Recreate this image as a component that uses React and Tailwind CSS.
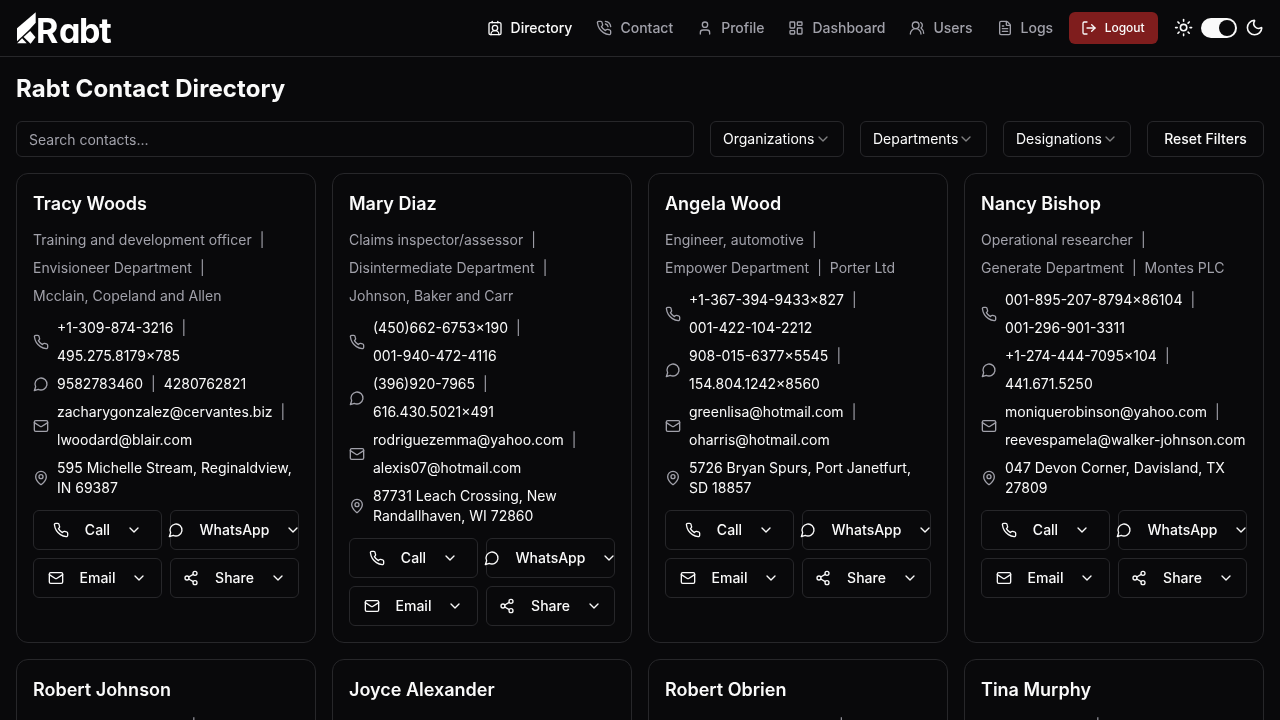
import React from "react";
import {
  ContactRound,
  User,
  LayoutDashboard,
  UsersRound,
  FileText,
  LogOut,
  Sun,
  Moon,
  Mail,
  MapPin,
  Share2,
  ChevronDown,
} from "lucide-react";

const HANDSET =
  "M22 16.92v3a2 2 0 0 1-2.18 2 19.79 19.79 0 0 1-8.63-3.07 19.5 19.5 0 0 1-6-6 19.79 19.79 0 0 1-3.07-8.67A2 2 0 0 1 4.11 2h3a2 2 0 0 1 2 1.72 12.84 12.84 0 0 0 .7 2.81 2 2 0 0 1-.45 2.11L8.09 9.91a16 16 0 0 0 6 6l1.27-1.27a2 2 0 0 1 2.11-.45 12.84 12.84 0 0 0 2.81.7A2 2 0 0 1 22 16.92z";

function Stroke({ className, paths }) {
  return (
    <svg
      className={className}
      viewBox="0 0 24 24"
      fill="none"
      stroke="currentColor"
      strokeWidth="2"
      strokeLinecap="round"
      strokeLinejoin="round"
    >
      {paths.map((d) => (
        <path key={d} d={d} />
      ))}
    </svg>
  );
}

const Phone = ({ className }) => <Stroke className={className} paths={[HANDSET]} />;
const PhoneCall = ({ className }) => (
  <Stroke className={className} paths={[HANDSET, "M14.05 2a9 9 0 0 1 8 7.94", "M14.05 6A5 5 0 0 1 18 10"]} />
);
const MessageCircle = ({ className }) => (
  <Stroke className={className} paths={["M7.9 20A9 9 0 1 0 4 16.1L2 22Z"]} />
);

const NAV = [
  { label: "Directory", icon: ContactRound, active: true },
  { label: "Contact", icon: PhoneCall },
  { label: "Profile", icon: User },
  { label: "Dashboard", icon: LayoutDashboard },
  { label: "Users", icon: UsersRound },
  { label: "Logs", icon: FileText },
];

const FILTERS = [
  { label: "Organizations", width: "w-[134px]" },
  { label: "Departments", width: "w-[127px]" },
  { label: "Designations", width: "w-[128px]" },
];

const CONTACTS = [
  {
    name: "Tracy Woods",
    role: ["Training and development officer", "Envisioneer Department", "Mcclain, Copeland and Allen"],
    phones: ["+1-309-874-3216", "495.275.8179x785"],
    chats: ["9582783460", "4280762821"],
    emails: ["zacharygonzalez@cervantes.biz", "lwoodard@blair.com"],
    address: "595 Michelle Stream, Reginaldview, IN 69387",
  },
  {
    name: "Mary Diaz",
    role: ["Claims inspector/assessor", "Disintermediate Department", "Johnson, Baker and Carr"],
    phones: ["(450)662-6753x190", "001-940-472-4116"],
    chats: ["(396)920-7965", "616.430.5021x491"],
    emails: ["rodriguezemma@yahoo.com", "alexis07@hotmail.com"],
    address: "87731 Leach Crossing, New Randallhaven, WI 72860",
  },
  {
    name: "Angela Wood",
    role: ["Engineer, automotive", "Empower Department", "Porter Ltd"],
    phones: ["+1-367-394-9433x827", "001-422-104-2212"],
    chats: ["908-015-6377x5545", "154.804.1242x8560"],
    emails: ["greenlisa@hotmail.com", "oharris@hotmail.com"],
    address: "5726 Bryan Spurs, Port Janetfurt, SD 18857",
  },
  {
    name: "Nancy Bishop",
    role: ["Operational researcher", "Generate Department", "Montes PLC"],
    phones: ["001-895-207-8794x86104", "001-296-901-3311"],
    chats: ["+1-274-444-7095x104", "441.671.5250"],
    emails: ["moniquerobinson@yahoo.com", "reevespamela@walker-johnson.com"],
    address: "047 Devon Corner, Davisland, TX 27809",
  },
];

const MORE = [
  { name: "Robert Johnson", role: ["Engineer, maintenance"] },
  { name: "Joyce Alexander", role: [] },
  { name: "Robert Obrien", role: ["Administrator, healthcare"] },
  { name: "Tina Murphy", role: ["Theatre director"] },
];

function Logo() {
  return (
    <svg width="98" height="34" viewBox="0 0 98 34" fill="#ffffff" aria-label="Rabt">
      <path d="M19.7 1.2V11.8L13 19 1 30.2V17.2z" />
      <path d="M14.2 20l5.3 6.2-4.9 6.6-7-6.7z" />
      <path d="M1.2 32.2l4.9-5 4.6 5z" />
      <text
        x="20 43 63 83.2"
        y="31.8"
        fontSize="34"
        className="font-['Inter',sans-serif] font-bold [font-feature-settings:'cv11']"
      >
        Rabt
      </text>
    </svg>
  );
}

function Items({ values }) {
  return (
    <div className="flex flex-wrap leading-7">
      {values.map((v, i) => (
        <span key={v} className="whitespace-nowrap">
          {v}
          {i < values.length - 1 && <span className="mx-2 text-[#a1a1aa]">|</span>}
        </span>
      ))}
    </div>
  );
}

function Line({ icon: Icon, children }) {
  return (
    <div className="flex items-center gap-2">
      <Icon className="size-4 shrink-0 text-[#a1a1aa]" />
      {children}
    </div>
  );
}

function ActionButton({ icon: Icon, label }) {
  return (
    <button className="flex h-10 items-center justify-center gap-4 rounded-md border border-[#27272a] text-sm font-medium whitespace-nowrap">
      <Icon className="size-4 shrink-0" />
      {label}
      <ChevronDown className="size-4 shrink-0" />
    </button>
  );
}

function Card({ c }) {
  return (
    <div className="rounded-xl border border-[#27272a] p-4 text-sm">
      <h2 className="mb-2 text-lg leading-7 font-semibold">{c.name}</h2>
      <div className="text-[#a1a1aa]">
        <Items values={c.role} />
      </div>
      <div className="mt-1">
        <Line icon={Phone}><Items values={c.phones} /></Line>
        <Line icon={MessageCircle}><Items values={c.chats} /></Line>
        <Line icon={Mail}><Items values={c.emails} /></Line>
        <div className="mt-1">
          <Line icon={MapPin}><span>{c.address}</span></Line>
        </div>
      </div>
      <div className="mt-3 grid grid-cols-2 gap-2">
        <ActionButton icon={Phone} label="Call" />
        <ActionButton icon={MessageCircle} label="WhatsApp" />
        <ActionButton icon={Mail} label="Email" />
        <ActionButton icon={Share2} label="Share" />
      </div>
    </div>
  );
}

export default function App() {
  return (
    <div className="h-[720px] overflow-hidden bg-[#09090b] font-['Inter',sans-serif] text-[#fafafa]">
      <div className="will-change-transform">
        <header className="flex h-[57px] items-center justify-between border-b border-[#27272a] px-4">
          <Logo />
          <div className="flex items-center gap-4">
            <nav className="flex items-center gap-6">
              {NAV.map(({ label, icon: Icon, active }) => (
                <a
                  key={label}
                  className={`flex items-center gap-2 text-sm font-medium ${active ? "text-[#fafafa]" : "text-[#a1a1aa]"}`}
                >
                  <Icon className="size-4" />
                  {label}
                </a>
              ))}
            </nav>
            <button className="-ml-[0.5px] flex h-8 w-[89px] items-center gap-2 rounded-md bg-[#7f1d1d] px-3 text-xs font-medium">
              <LogOut className="size-4" />
              Logout
            </button>
            <div className="flex items-center gap-2">
              <Sun className="size-[19.2px]" />
              <div className="flex h-5 w-9 items-center justify-end rounded-full bg-[#fafafa] p-0.5">
                <div className="size-4 rounded-full bg-[#09090b]" />
              </div>
              <Moon className="size-[19.2px]" />
            </div>
          </div>
        </header>
        <main className="p-4">
          <h1 className="mb-4 text-2xl font-bold tracking-[0.085px]">Rabt Contact Directory</h1>
          <div className="mb-4 flex gap-4">
            <input
              className="h-9 min-w-0 flex-1 rounded-md border border-[#27272a] bg-transparent px-3 text-sm placeholder:text-[#a1a1aa]"
              placeholder="Search contacts..."
            />
            {FILTERS.map(({ label, width }) => (
              <button
                key={label}
                className={`flex h-9 items-center justify-between rounded-md border border-[#27272a] px-3 text-sm ${width}`}
              >
                {label}
                <ChevronDown className="size-4 shrink-0 opacity-50" />
              </button>
            ))}
            <button className="h-9 w-[117px] rounded-md border border-[#27272a] text-sm font-medium">
              Reset Filters
            </button>
          </div>
          <div className="grid grid-cols-4 gap-4">
            {CONTACTS.map((c) => (
              <Card key={c.name} c={c} />
            ))}
            {MORE.map((c) => (
              <div key={c.name} className="rounded-xl border border-[#27272a] p-4 text-sm">
                <h2 className="mb-2 text-lg leading-7 font-semibold">{c.name}</h2>
                <div className="h-24 text-[#a1a1aa]">
                  <Items values={[...c.role, ""]} />
                </div>
              </div>
            ))}
          </div>
        </main>
      </div>
    </div>
  );
}
